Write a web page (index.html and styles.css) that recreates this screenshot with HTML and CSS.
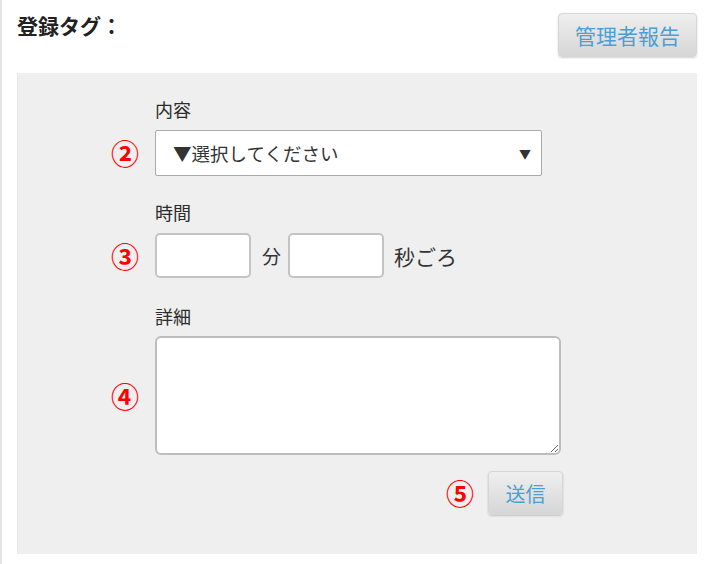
FILE: index.html
```html
<!DOCTYPE html>
<html lang="ja">
<head>
<meta charset="utf-8">
<link rel="stylesheet" href="styles.css">
</head>
<body>
<div class="page">
  <div class="header">
    <h2 class="title">登録タグ：</h2>
    <button class="btn btn-report" type="button">管理者報告</button>
  </div>
  <div class="panel">
    <div class="group group-content">
      <div class="label">内容</div>
      <div class="row">
        <span class="marker">②</span>
        <div class="select">
          <span>▼選択してください</span>
          <span class="arrow">▼</span>
        </div>
      </div>
    </div>
    <div class="group group-time">
      <div class="label">時間</div>
      <div class="row">
        <span class="marker">③</span>
        <div class="time">
          <input class="num" type="text">
          <span class="unit">分</span>
          <input class="num" type="text">
          <span class="unit unit-sec">秒ごろ</span>
        </div>
      </div>
    </div>
    <div class="group group-detail">
      <div class="label">詳細</div>
      <div class="row">
        <span class="marker">④</span>
        <textarea class="detail"></textarea>
      </div>
    </div>
    <div class="submit-row">
      <span class="marker marker-send">⑤</span>
      <button class="btn btn-send" type="button">送信</button>
    </div>
  </div>
</div>
</body>
</html>
```

FILE: styles.css
```css
* { box-sizing: border-box; }
html, body { margin: 0; padding: 0; background: #fff; }
body {
  font-family: "Noto Sans CJK JP", "Noto Sans", sans-serif;
  color: #333;
  width: 706px;
  height: 564px;
  overflow: hidden;
}
.page {
  border-left: 2px solid #e4e4e4;
  height: 564px;
  padding: 0 9px 0 15px;
}
.header {
  display: flex;
  justify-content: space-between;
  align-items: flex-start;
  height: 73px;
}
.title {
  margin: 0;
  padding-top: 10px;
  font-size: 21px;
  font-weight: bold;
  line-height: 30px;
  color: #222;
}
.btn {
  font-family: inherit;
  color: #4b9fd5;
  border: 1px solid #d6d6d6;
  border-radius: 4px;
  background: linear-gradient(#efefef, #d6d6d6);
  box-shadow: 0 1px 2px rgba(0,0,0,0.18);
  padding: 0;
  cursor: pointer;
}
.btn-report {
  margin-top: 13px;
  width: 139px;
  height: 44px;
  font-size: 21px;
  line-height: 1;
}
.panel {
  background: #efefef;
  border-left: 1px solid #e6e6e6;
  height: 481px;
  padding-top: 24px;
}
.group-content { margin-bottom: 24px; }
.group-time { margin-bottom: 26px; }
.group-detail { margin-bottom: 16px; }
.label {
  margin-left: 137px;
  font-size: 18px;
  line-height: 24px;
  margin-bottom: 9px;
  color: #2b2b2b;
}
.group-detail .label { margin-bottom: 8px; }
.row {
  display: flex;
  align-items: center;
}
.marker {
  width: 137px;
  padding-right: 16px;
  text-align: right;
  color: #f00;
  font-size: 28px;
  font-weight: bold;
  line-height: 1;
  flex-shrink: 0;
}
.select {
  width: 387px;
  height: 46px;
  background: #fff;
  border: 1px solid #a9a9a9;
  border-radius: 2px;
  display: flex;
  justify-content: space-between;
  align-items: center;
  padding: 0 10px 0 17px;
  font-size: 18.5px;
}
.arrow { font-size: 12px; }
.time {
  display: flex;
  align-items: center;
}
.num {
  width: 96px;
  height: 45px;
  border: 2px solid #c4c4c4;
  border-radius: 5px;
  background: #fff;
  margin: 0;
}
.unit {
  font-size: 19px;
  margin: 0 7px 0 11px;
}
.unit-sec {
  font-size: 21px;
  margin-left: 10px;
}
.detail {
  width: 406px;
  height: 119px;
  border: 2px solid #bdbdbd;
  border-radius: 6px;
  background: #fff;
  margin: 0;
  resize: both;
  font-family: inherit;
  display: block;
}
.submit-row {
  display: flex;
  align-items: center;
}
.marker-send {
  width: auto;
  margin-left: 428px;
  padding-right: 0;
  margin-right: 14px;
}
.btn-send {
  width: 75px;
  height: 44px;
  font-size: 20px;
}
```
